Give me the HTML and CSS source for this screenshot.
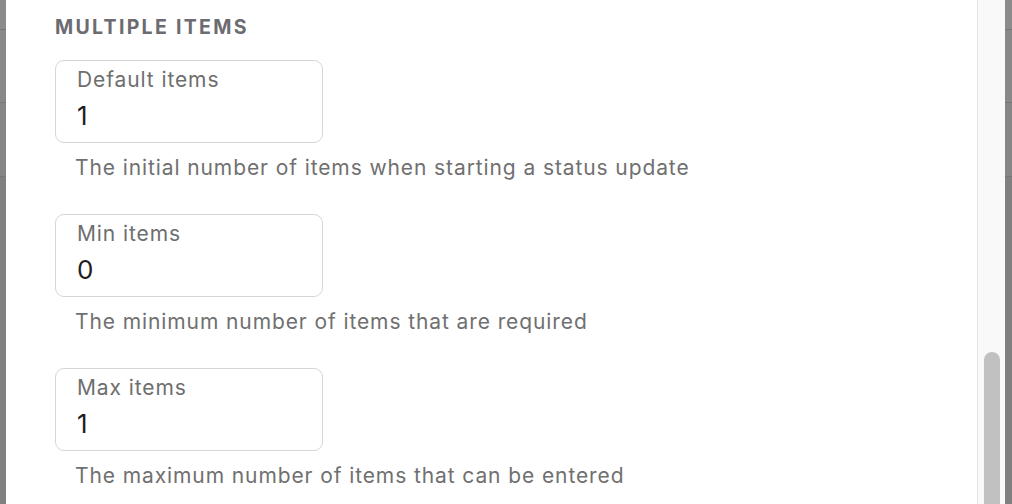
FILE: index.html
```html
<!DOCTYPE html>
<html lang="en">
<head>
<meta charset="utf-8">
<title>Multiple items</title>
<link rel="stylesheet" href="styles.css">
</head>
<body>
<div class="window">
  <div class="edge">
    <div class="edge-seg s1"></div>
    <div class="edge-seg s2"></div>
    <div class="edge-seg s3"></div>
    <div class="edge-seg s4"></div>
  </div>
  <main class="panel">
    <h2 class="section-title">MULTIPLE ITEMS</h2>
    <div class="field">
      <div class="field-box">
        <div class="field-label">Default items</div>
        <div class="field-value">1</div>
      </div>
      <p class="field-help">The initial number of items when starting a status update</p>
    </div>
    <div class="field">
      <div class="field-box">
        <div class="field-label">Min items</div>
        <div class="field-value">0</div>
      </div>
      <p class="field-help">The minimum number of items that are required</p>
    </div>
    <div class="field">
      <div class="field-box">
        <div class="field-label">Max items</div>
        <div class="field-value">1</div>
      </div>
      <p class="field-help">The maximum number of items that can be entered</p>
    </div>
  </main>
  <div class="scroll-track">
    <div class="scroll-thumb"></div>
  </div>
  <div class="edge edge-right">
    <div class="edge-seg s1"></div>
    <div class="edge-seg s2"></div>
    <div class="edge-seg s3"></div>
    <div class="edge-seg s4"></div>
  </div>
</div>
</body>
</html>
```

FILE: styles.css
```css
html, body {
  margin: 0;
  padding: 0;
  height: 100%;
  overflow: hidden;
}

body {
  font-family: "Inter", "Liberation Sans", sans-serif;
  background: #ffffff;
}

.window {
  display: flex;
  height: 504px;
  width: 1012px;
}

.edge {
  width: 6px;
  flex: none;
  display: flex;
  flex-direction: column;
}

.edge-right {
  width: 7px;
}

.edge-seg {
  flex: none;
  border-bottom: 1px solid #777777;
}

.s1 { height: 29px; background: #8b8b8b; }
.s2 { height: 72px; background: #888888; }
.s3 { height: 73px; background: #868686; }
.s4 { flex: 1; background: #808080; border-bottom: none; }

.panel {
  flex: 1;
  background: #ffffff;
  padding: 15px 0 0 49px;
  overflow: hidden;
}

.section-title {
  margin: 0 0 21px 0;
  font-size: 19.5px;
  line-height: 24px;
  font-weight: 700;
  color: #6b6b70;
  letter-spacing: 2.3px;
}

.field {
  margin-bottom: 34px;
}

.field-box {
  width: 245px;
  border: 1px solid #d6d6d6;
  border-radius: 9px;
  padding: 7px 0 11px 21px;
}

.field-label {
  font-size: 21px;
  line-height: 24px;
  color: #6e6e6e;
  letter-spacing: 0.9px;
  margin-bottom: 9px;
}

.field-value {
  font-size: 26px;
  line-height: 30px;
  color: #1e1e1e;
}

.field-help {
  margin: 13px 0 0 20px;
  font-size: 21px;
  line-height: 24px;
  color: #707070;
  letter-spacing: 0.9px;
}

.scroll-track {
  flex: none;
  background: #f9f9f9;
  border-left: 1px solid #e6e6e6;
  padding: 352px 0 0 6px;
  box-sizing: border-box;
  width: 28px;
  overflow: hidden;
}

.scroll-thumb {
  width: 16px;
  height: 200px;
  border-radius: 8px;
  background: #c1c1c1;
}
```
